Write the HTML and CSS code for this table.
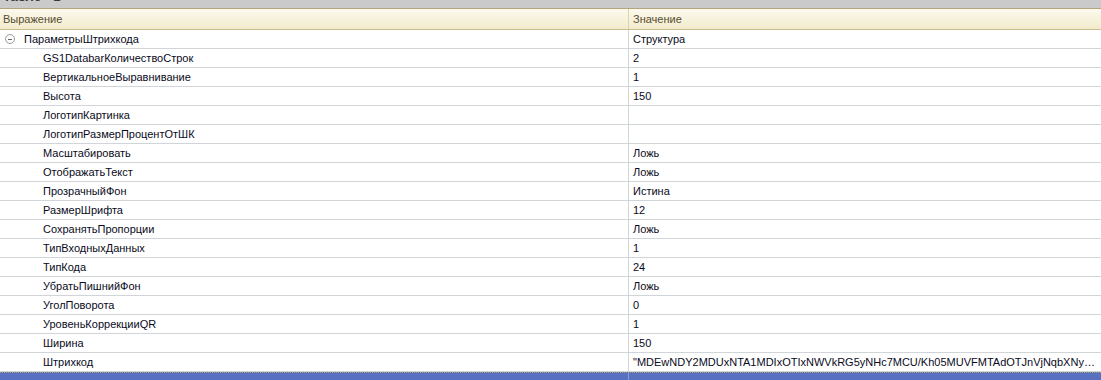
FILE: index.html
```html
<!DOCTYPE html>
<html lang="ru">
<head>
<meta charset="utf-8">
<link rel="stylesheet" href="styles.css">
</head>
<body>
<div class="window">
  <div class="title"><span class="title-text">Табло - 1</span></div>
  <div class="table">
    <div class="row head">
      <div class="cell c1">Выражение</div>
      <div class="cell c2">Значение</div>
    </div>
    <div class="row">
      <div class="cell c1 parent"><span class="toggle"></span>ПараметрыШтрихкода</div>
      <div class="cell c2">Структура</div>
    </div>
    <div class="row"><div class="cell c1 child">GS1DatabarКоличествоСтрок</div><div class="cell c2">2</div></div>
    <div class="row"><div class="cell c1 child">ВертикальноеВыравнивание</div><div class="cell c2">1</div></div>
    <div class="row"><div class="cell c1 child">Высота</div><div class="cell c2">150</div></div>
    <div class="row"><div class="cell c1 child">ЛоготипКартинка</div><div class="cell c2"></div></div>
    <div class="row"><div class="cell c1 child">ЛоготипРазмерПроцентОтШК</div><div class="cell c2"></div></div>
    <div class="row"><div class="cell c1 child">Масштабировать</div><div class="cell c2">Ложь</div></div>
    <div class="row"><div class="cell c1 child">ОтображатьТекст</div><div class="cell c2">Ложь</div></div>
    <div class="row"><div class="cell c1 child">ПрозрачныйФон</div><div class="cell c2">Истина</div></div>
    <div class="row"><div class="cell c1 child">РазмерШрифта</div><div class="cell c2">12</div></div>
    <div class="row"><div class="cell c1 child">СохранятьПропорции</div><div class="cell c2">Ложь</div></div>
    <div class="row"><div class="cell c1 child">ТипВходныхДанных</div><div class="cell c2">1</div></div>
    <div class="row"><div class="cell c1 child">ТипКода</div><div class="cell c2">24</div></div>
    <div class="row"><div class="cell c1 child">УбратьПишнийФон</div><div class="cell c2">Ложь</div></div>
    <div class="row"><div class="cell c1 child">УголПоворота</div><div class="cell c2">0</div></div>
    <div class="row"><div class="cell c1 child">УровеньКоррекцииQR</div><div class="cell c2">1</div></div>
    <div class="row"><div class="cell c1 child">Ширина</div><div class="cell c2">150</div></div>
    <div class="row"><div class="cell c1 child">Штрихкод</div><div class="cell c2 ellipsis">"MDEwNDY2MDUxNTA1MDIxOTIxNWVkRG5yNHc7MCU/Kh05MUVFMTAdOTJnVjNqbXNyY2VkRG5yNHc7MCU/Kh05MUVFMTAdOTJn"</div></div>
    <div class="row selected"><div class="cell c1"></div><div class="cell c2"></div></div>
  </div>
</div>
</body>
</html>
```

FILE: styles.css
```css
html, body {
  margin: 0;
  padding: 0;
  background: #ffffff;
}
.window {
  width: 1101px;
  height: 380px;
  overflow: hidden;
  font-family: "Liberation Sans", Arial, sans-serif;
  font-size: 11px;
}
.title {
  height: 8px;
  overflow: hidden;
  background: #cacaca;
  border-bottom: 1px solid #b3a67c;
}
.title-text {
  display: block;
  margin-top: -10px;
  padding-left: 3px;
  font-size: 13px;
  font-weight: bold;
  line-height: 14px;
  color: #3a3a3a;
}
.table {
  display: flex;
  flex-direction: column;
}
.row {
  display: grid;
  grid-template-columns: 628px 1fr;
  height: 18px;
  border-bottom: 1px solid #d0d5da;
}
.cell {
  line-height: 18px;
  white-space: nowrap;
  overflow: hidden;
  color: #0a0a22;
}
.c1 {
  padding-left: 3px;
  display: flex;
  align-items: center;
}
.c2 {
  border-left: 1px solid #d0d5da;
  padding-left: 4px;
  padding-right: 6px;
}
.ellipsis {
  text-overflow: ellipsis;
}
.head {
  height: 20px;
  background: linear-gradient(#fbf9ee, #f2ebcc);
  border-bottom: 1px solid #c9bd8e;
}
.head .cell {
  line-height: 20px;
  color: #574c30;
}
.head .c2 {
  border-left: 1px solid #ddd3ad;
}
.parent {
  padding-left: 5px;
}
.toggle {
  width: 8px;
  height: 8px;
  border: 1px solid #9a9a9a;
  border-radius: 50%;
  margin-right: 9px;
  position: relative;
  flex: none;
}
.toggle::after {
  content: "";
  position: absolute;
  left: 2px;
  right: 2px;
  top: 3.5px;
  height: 1px;
  background: #666;
}
.child {
  padding-left: 43px;
}
.selected {
  background: #5870c0;
  border-top: 1px dotted #b0a070;
  border-bottom: none;
}
.selected .c2 {
  border-left: 1px solid #8a9ad6;
}
```
